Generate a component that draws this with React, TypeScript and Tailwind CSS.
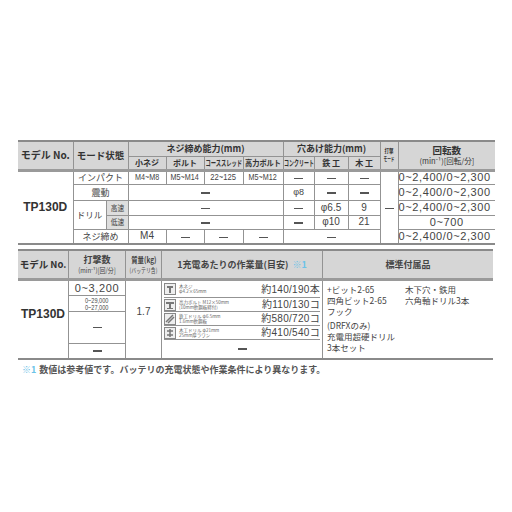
import React from 'react';

const jp = { fontFamily: '"Noto Sans CJK JP", "Noto Sans", sans-serif' };
const num = { fontFamily: '"Liberation Sans", "Noto Sans CJK JP", sans-serif' };

const line = 'border border-[#939393]';
const head = 'bg-[#d6d6d6] text-[#333] font-bold text-center align-middle leading-none';
const cell = 'text-center align-middle leading-none text-[#444]';

// condensed text that stays centred even when wider than its cell
function Narrow({ children, s = 0.7 }: { children: React.ReactNode; s?: number }) {
  return (
    <div className="flex justify-center whitespace-nowrap">
      <span className="inline-block shrink-0" style={{ transform: `scaleX(${s})` }}>
        {children}
      </span>
    </div>
  );
}

function Dash() {
  return <span className="inline-block w-[9px] h-[1.5px] bg-[#555] align-middle" />;
}

function Rpm({ v = '0~2,400/0~2,300' }: { v?: string }) {
  return (
    <span style={num} className="text-[11px] leading-none tracking-[0.6px] text-[#444]">
      {v}
    </span>
  );
}

function TopTable() {
  return (
    <table
      className="table-fixed border-collapse w-[477px] border-t-2 border-b-2 border-[#8a8a8a] text-[9px] leading-none [&_td]:p-0"
      style={jp}
    >
      <colgroup>
        <col className="w-[55px]" />
        <col className="w-[33px]" />
        <col className="w-[22px]" />
        <col className="w-[38px]" />
        <col className="w-[38px]" />
        <col className="w-[39px]" />
        <col className="w-[40px]" />
        <col className="w-[31px]" />
        <col className="w-[34px]" />
        <col className="w-[32px]" />
        <col className="w-[18px]" />
        <col className="w-[97px]" />
      </colgroup>
      <tbody>
        <tr className="h-[15px]">
          <td rowSpan={2} className={`${head} border-r border-[#939393] text-[10px]`}>
            モデル No.
          </td>
          <td rowSpan={2} colSpan={2} className={`${head} ${line} text-[9.5px]`}>
            モード状態
          </td>
          <td colSpan={4} className={`${head} ${line} text-[9px]`}>
            ネジ締め能力(mm)
          </td>
          <td colSpan={3} className={`${head} ${line} text-[9px]`}>
            穴あけ能力(mm)
          </td>
          <td rowSpan={2} className={`${head} ${line} text-[6px]`}>
            <Narrow s={0.75}>打撃</Narrow>
            <div className="h-[2px]" />
            <Narrow s={0.6}>モード</Narrow>
          </td>
          <td rowSpan={2} className={`${head} border-l border-[#939393] text-[9.5px]`}>
            回転数
            <div className="text-[7.5px] mt-[2px] font-normal">(min⁻¹)[回転/分]</div>
          </td>
        </tr>
        <tr className="h-[14px]">
          <td className={`${head} ${line} text-[8px]`}>小ネジ</td>
          <td className={`${head} ${line} text-[8px]`}>ボルト</td>
          <td className={`${head} ${line} text-[8px]`}>
            <Narrow s={0.66}>コーススレッド</Narrow>
          </td>
          <td className={`${head} ${line} text-[8px]`}>
            <Narrow s={0.9}>高力ボルト</Narrow>
          </td>
          <td className={`${head} ${line} text-[8px]`}>
            <Narrow s={0.62}>コンクリート</Narrow>
          </td>
          <td className={`${head} ${line} text-[8px]`}>鉄 工</td>
          <td className={`${head} ${line} text-[8px]`}>木 工</td>
        </tr>
        <tr className="h-[14px] border-t-[3px] border-[#9a9a9a]">
          <td rowSpan={5} className="text-center align-middle border-r border-[#939393] pb-[4px]">
            <span style={num} className="text-[12px] font-bold text-[#333]">TP130D</span>
          </td>
          <td colSpan={2} className={`${cell} ${line} text-[9px]`}>インパクト</td>
          <td className={`${cell} ${line} text-[9px]`} style={num}>
            <Narrow s={0.8}>M4~M8</Narrow>
          </td>
          <td className={`${cell} ${line} text-[9px]`} style={num}>
            <Narrow s={0.8}>M5~M14</Narrow>
          </td>
          <td className={`${cell} ${line} text-[9px]`} style={num}>
            <Narrow s={0.85}>22~125</Narrow>
          </td>
          <td className={`${cell} ${line} text-[9px]`} style={num}>
            <Narrow s={0.8}>M5~M12</Narrow>
          </td>
          <td className={`${cell} ${line}`}><Dash /></td>
          <td className={`${cell} ${line}`}><Dash /></td>
          <td className={`${cell} ${line}`}><Dash /></td>
          <td rowSpan={5} className={`${cell} ${line}`}><Dash /></td>
          <td className={`${cell} border-t border-b border-l border-[#939393] text-left pl-[2px]`}><Rpm /></td>
        </tr>
        <tr className="h-[16px]">
          <td colSpan={2} className={`${cell} ${line} text-[9px]`}>震動</td>
          <td colSpan={4} className={`${cell} ${line}`}><Dash /></td>
          <td className={`${cell} ${line} text-[9px]`} style={num}>φ8</td>
          <td className={`${cell} ${line}`}><Dash /></td>
          <td className={`${cell} ${line}`}><Dash /></td>
          <td className={`${cell} border-t border-b border-l border-[#939393] text-left pl-[2px]`}><Rpm /></td>
        </tr>
        <tr className="h-[15px]">
          <td rowSpan={2} className={`${cell} ${line} text-[8.5px]`}>ドリル</td>
          <td className={`${cell} ${line} bg-[#dedede] text-[7.5px]`}>
            <Narrow s={0.9}>高速</Narrow>
          </td>
          <td colSpan={4} className={`${cell} ${line}`}><Dash /></td>
          <td className={`${cell} ${line}`}><Dash /></td>
          <td className={`${cell} ${line} text-[10px]`} style={num}>φ6.5</td>
          <td className={`${cell} ${line} text-[10px]`} style={num}>9</td>
          <td className={`${cell} border-t border-b border-l border-[#939393] text-left pl-[2px]`}><Rpm /></td>
        </tr>
        <tr className="h-[14px]">
          <td className={`${cell} ${line} bg-[#dedede] text-[7.5px]`}>
            <Narrow s={0.9}>低速</Narrow>
          </td>
          <td colSpan={4} className={`${cell} ${line}`}><Dash /></td>
          <td className={`${cell} ${line}`}><Dash /></td>
          <td className={`${cell} ${line} text-[10px]`} style={num}>φ10</td>
          <td className={`${cell} ${line} text-[10px]`} style={num}>21</td>
          <td className={`${cell} border-t border-b border-l border-[#939393]`}><Rpm v="0~700" /></td>
        </tr>
        <tr className="h-[15px]">
          <td colSpan={2} className={`${cell} ${line} text-[9px]`}>ネジ締め</td>
          <td className={`${cell} ${line} text-[10px]`} style={num}>M4</td>
          <td className={`${cell} ${line}`}><Dash /></td>
          <td className={`${cell} ${line}`}><Dash /></td>
          <td className={`${cell} ${line}`}><Dash /></td>
          <td colSpan={3} className={`${cell} ${line}`}><Dash /></td>
          <td className={`${cell} border-t border-l border-[#939393] text-left pl-[2px]`}><Rpm /></td>
        </tr>
      </tbody>
    </table>
  );
}

function WorkIcon({ kind }: { kind: number }) {
  return (
    <svg width="12" height="12" viewBox="0 0 12 12" className="shrink-0">
      <rect x="0.5" y="0.5" width="11" height="11" fill="#eee" stroke="#888" />
      {kind === 0 && <path d="M3 3h6v2H7v5H5V5H3z" fill="#777" />}
      {kind === 1 && <path d="M2 3h8v2H7v4h2v1H3V9h2V5H2z" fill="#777" />}
      {kind === 2 && <path d="M2 9L9 2M4 10l6-6" stroke="#777" strokeWidth="1.5" />}
      {kind === 3 && <path d="M6 2v8M3 4h6M3 8h6" stroke="#777" strokeWidth="1.5" />}
    </svg>
  );
}

const work = [
  { a: '木ネジ', b: 'φ4.2×65mm', n: '約140/190本', h: 'h-[17px]' },
  { a: '高力ボルト M12×50mm', b: '(10mm軟鋼板締付)', n: '約110/130コ', h: 'h-[14px]' },
  { a: '鉄工ドリル φ6.5mm', b: '1.6mm軟鋼板', n: '約580/720コ', h: 'h-[14px]' },
  { a: '木工ドリル φ21mm', b: '25mm厚ラワン', n: '約410/540コ', h: 'h-[14px]' },
];

function BottomTable() {
  return (
    <div className="w-[475px] border-t-2 border-b-2 border-[#8a8a8a] text-[#444]" style={jp}>
      <div className="flex h-[30px] bg-[#d6d6d6] border-b-[3px] border-[#9a9a9a] font-bold leading-none">
        <div className="w-[51px] flex items-center justify-center border-r border-[#939393] text-[9.5px] text-[#333]">
          モデル No.
        </div>
        <div className="w-[57px] flex flex-col items-center justify-center gap-[3px] border-r border-[#939393] text-[9px]">
          <span>打撃数</span>
          <span className="text-[7px] font-normal">
            <Narrow s={0.85}>(min⁻¹)[回/分]</Narrow>
          </span>
        </div>
        <div className="w-[36px] flex flex-col items-center justify-center gap-[3px] border-r border-[#939393] text-[8px]">
          <Narrow s={0.8}>質量(kg)</Narrow>
          <span className="text-[6.5px] font-normal">
            <Narrow s={0.75}>(バッテリ含)</Narrow>
          </span>
        </div>
        <div className="w-[161px] flex items-center justify-center border-r border-[#939393] text-[9px]">
          1充電あたりの作業量(目安)
          <span className="text-[#6cc3e8] ml-[4px]">※1</span>
        </div>
        <div className="flex-1 flex items-center justify-center text-[9px]">標準付属品</div>
      </div>
      <div className="flex h-[77px]">
        <div className="w-[51px] flex items-center justify-center pb-[12px] border-r border-[#939393]">
          <span style={num} className="text-[12px] font-bold text-[#333]">TP130D</span>
        </div>
        <div className="w-[57px] flex flex-col border-r border-[#939393]">
          <div className="h-[15px] flex items-center justify-center border-b border-[#939393]">
            <Rpm v="0~3,200" />
          </div>
          <div className="h-[16px] flex flex-col items-center justify-center border-b border-[#939393] text-[7px] leading-[7px]" style={num}>
            <Narrow s={0.8}>0~29,000</Narrow>
            <Narrow s={0.8}>0~27,000</Narrow>
          </div>
          <div className="h-[32px] flex items-center justify-center border-b border-[#939393]">
            <Dash />
          </div>
          <div className="flex-1 flex items-center justify-center">
            <Dash />
          </div>
        </div>
        <div className="w-[36px] flex justify-center pt-[26px] border-r border-[#939393]">
          <span style={num} className="text-[10px] leading-none">1.7</span>
        </div>
        <div className="w-[161px] flex flex-col border-r border-[#939393] px-[2px]">
          {work.map((w, i) => (
            <div key={i} className={`${w.h} flex items-center gap-[3px] border-b border-[#939393]`}>
              <WorkIcon kind={i} />
              <div className="flex flex-col leading-[5px] text-[4.5px] text-[#666] w-[70px]">
                <span className="whitespace-nowrap">{w.a}</span>
                <span className="whitespace-nowrap">{w.b}</span>
              </div>
              <span className="ml-auto text-[10px] tracking-[0.3px]" style={num}>
                {w.n}
              </span>
            </div>
          ))}
          <div className="flex-1 flex items-center justify-center">
            <Dash />
          </div>
        </div>
        <div className="flex-1 flex gap-[10px] pl-[4px] pt-[3px] text-[8.5px] leading-[11px]">
          <div className="flex flex-col">
            <span>+ビット2-65</span>
            <span>四角ビット2-65</span>
            <span>フック</span>
            <span className="mt-[3px]">(DRFXのみ)</span>
            <span>充電用超硬ドリル</span>
            <span>3本セット</span>
          </div>
          <div className="flex flex-col">
            <span>木下穴・鉄用</span>
            <span>六角軸ドリル3本</span>
          </div>
        </div>
      </div>
    </div>
  );
}

export default function App() {
  return (
    <div className="w-[512px] h-[512px] bg-white pt-[140px] pl-[18px]">
      <TopTable />
      <div className="mt-[4px]">
        <BottomTable />
      </div>
      <p className="mt-[3px] pl-[4px] text-[9px] font-bold text-[#555]" style={jp}>
        <span className="text-[#6cc3e8] mr-[3px]">※1</span>
        数値は参考値です。バッテリの充電状態や作業条件により異なります。
      </p>
    </div>
  );
}
